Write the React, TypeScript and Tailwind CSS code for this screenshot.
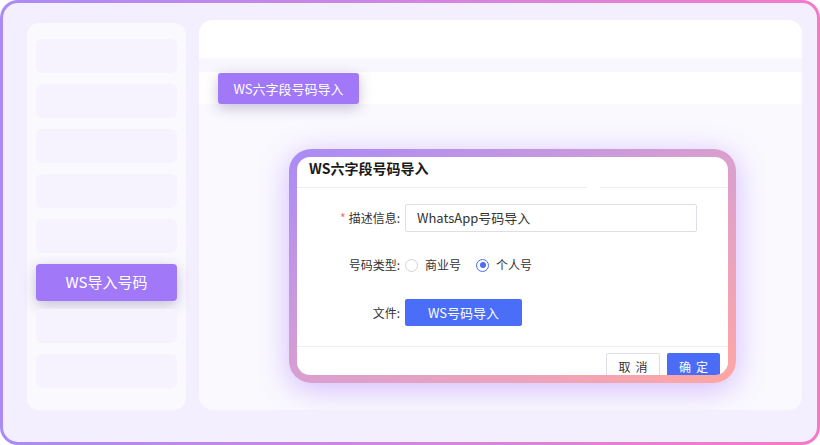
import React from "react";

const font = { fontFamily: '"Noto Sans CJK SC", "Noto Sans", sans-serif' };

function Radio({ checked, label }: { checked?: boolean; label: string }) {
  return (
    <div className="flex items-center gap-[7px]">
      <span
        className={`w-[13px] h-[13px] rounded-full border flex items-center justify-center bg-white ${
          checked ? "border-[#4a6cf7]" : "border-[#d4d4d8]"
        }`}
      >
        {checked && <span className="w-[6px] h-[6px] rounded-full bg-[#4a6cf7]" />}
      </span>
      <span className="text-[12px] text-[#333]">{label}</span>
    </div>
  );
}

export default function App() {
  const items = [0, 1, 2, 3, 4];
  return (
    <div className="w-[820px] h-[445px] bg-white" style={font}>
      <div className="w-full h-full rounded-[18px] p-[3px] bg-linear-to-r from-[#a98bf6] via-[#d185e2] to-[#f47ac8]">
        {/* Page */}
        <div className="w-full h-full rounded-[15px] bg-[#f4effe] flex gap-[13px] pl-[24px] pr-[15px] pt-[17px] pb-[32px]">
          {/* Sidebar */}
          <div className="w-[159px] mt-[3px] rounded-[12px] bg-[#faf9fe] pt-[16px] px-[9px] flex flex-col gap-[11px]">
            {items.map((i) => (
              <div key={i} className="h-[34px] rounded-[6px] bg-[#f6f3fe]" />
            ))}
            <div className="h-[37px] -mb-[3px] rounded-[4px] bg-[#a078f8] flex items-center justify-center text-white text-[15px] shadow-[0_4px_14px_rgba(60,40,110,0.28)]">
              WS导入号码
            </div>
            <div className="h-[34px] rounded-[6px] bg-[#f6f3fe]" />
            <div className="h-[34px] rounded-[6px] bg-[#f6f3fe]" />
          </div>

          {/* Main panel */}
          <div className="flex-1 rounded-[14px] bg-[#faf9fe] overflow-hidden flex flex-col">
            <div className="h-[38px] bg-white" />
            <div className="h-[14px] bg-[#f8f6fe]" />
            <div className="h-[32px] bg-white">
              <div className="ml-[19px] mt-[1px] w-[141px] h-[31px] rounded-[3px] bg-[#a078f8] flex items-center justify-center text-white text-[13px] shadow-[0_4px_14px_rgba(60,40,110,0.28)]">
                WS六字段号码导入
              </div>
            </div>

            <div className="flex-1 pl-[90px] pt-[45px]">
              {/* Dialog */}
              <div className="w-[447px] h-[234px] rounded-[22px] p-[8px] bg-linear-to-br from-[#a98af7] via-[#d99fcf] to-[#ffa6a2] shadow-[0_6px_30px_rgba(165,110,255,0.45)]">
                <div className="w-full h-full rounded-[13px] bg-white overflow-hidden flex flex-col">
                  <div className="h-[30px] shrink-0 pl-[12px] flex items-start">
                    <span className="text-[14px] font-bold text-[#1a1a1a] leading-[20px] mt-[1px]">
                      WS六字段号码导入
                    </span>
                  </div>
                  {/* divider with a small gap */}
                  <div className="flex h-px shrink-0">
                    <div className="w-[290px] bg-[#eeeef2]" />
                    <div className="w-[13px]" />
                    <div className="flex-1 bg-[#eeeef2]" />
                  </div>

                  <div className="flex flex-col pt-[16px] gap-[19px]">
                    <div className="flex items-center h-[28px]">
                      <div className="w-[103px] text-right text-[12px] text-[#333]">
                        <span className="text-[#f56c6c] mr-[3px]">*</span>描述信息:
                      </div>
                      <div className="ml-[5px] w-[292px] h-[28px] border border-[#dcdfe6] rounded-[2px] flex items-center pl-[11px] text-[13px] text-[#333]">
                        WhatsApp号码导入
                      </div>
                    </div>

                    <div className="flex items-center h-[28px]">
                      <div className="w-[103px] text-right text-[12px] text-[#333]">号码类型:</div>
                      <div className="ml-[5px] flex items-center gap-[15px]">
                        <Radio label="商业号" />
                        <Radio checked label="个人号" />
                      </div>
                    </div>

                    <div className="flex items-center h-[27px] mt-[1px]">
                      <div className="w-[103px] text-right text-[12px] text-[#333]">文件:</div>
                      <div className="ml-[5px] w-[117px] h-[27px] rounded-[2px] bg-[#4a6ef8] flex items-center justify-center text-white text-[13px]">
                        WS号码导入
                      </div>
                    </div>
                  </div>

                  <div className="mt-[20px] border-t border-[#eeeef2] flex justify-end gap-[7px] pr-[8px] pt-[6px]">
                    <div className="w-[54px] h-[28px] border border-[#dcdfe6] rounded-[2px] flex items-center justify-center text-[12px] text-[#333] tracking-[5px] pl-[5px]">
                      取消
                    </div>
                    <div className="w-[53px] h-[28px] rounded-[2px] bg-[#4a6cf7] flex items-center justify-center text-[12px] text-white tracking-[5px] pl-[5px]">
                      确定
                    </div>
                  </div>
                </div>
              </div>
            </div>
          </div>
        </div>
      </div>
    </div>
  );
}
